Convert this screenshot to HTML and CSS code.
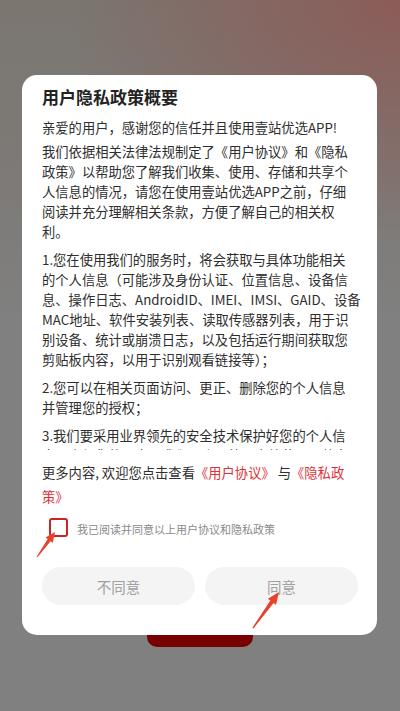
FILE: index.html
```html
<!DOCTYPE html>
<html lang="zh-CN">
<head>
<meta charset="utf-8">
<title>用户隐私政策概要</title>
<link rel="stylesheet" href="styles.css">
</head>
<body>
<div class="screen">
  <div class="page">
    <div class="page-btn"></div>
  </div>
  <div class="mask">
    <div class="card">
      <h1 class="title">用户隐私政策概要</h1>
      <div class="scroll">
        <p class="p-first">亲爱的用户，感谢您的信任并且使用壹站优选APP!</p>
        <p>我们依据相关法律法规制定了《用户协议》和《隐私<br>政策》以帮助您了解我们收集、使用、存储和共享个<br>人信息的情况，请您在使用壹站优选APP之前，仔细<br>阅读并充分理解相关条款，方便了解自己的相关权<br>利。</p>
        <p>1.您在使用我们的服务时，将会获取与具体功能相关<br>的个人信息（可能涉及身份认证、位置信息、设备信<br>息、操作日志、AndroidID、IMEI、IMSI、GAID、设备<br>MAC地址、软件安装列表、读取传感器列表，用于识<br>别设备、统计或崩溃日志，以及包括运行期间获取您<br>剪贴板内容，以用于识别观看链接等）；</p>
        <p>2.您可以在相关页面访问、更正、删除您的个人信息<br>并管理您的授权；</p>
        <p>3.我们要采用业界领先的安全技术保护好您的个人信<br>息，未经您的同意，我们不会从第三方处获取、共享<br>或对外提供您的信息。</p>
      </div>
      <p class="more">更多内容, 欢迎您点击查看<span class="link">《用户协议》</span> 与<span class="link">《隐私政<br>策》</span></p>
      <div class="check-row">
        <span class="checkbox"></span>
        <span class="check-text">我已阅读并同意以上用户协议和隐私政策</span>
      </div>
      <div class="actions">
        <div class="btn">不同意</div>
        <div class="btn">同意</div>
      </div>
    </div>
  </div>
  <svg class="arrows" width="400" height="711" viewBox="0 0 400 711">
    <polygon fill="#e8412c" points="36.6,556.7 47.7,539.1 45.5,537.5 55,532 52.8,542.7 50.6,541.2 37.4,557.3"/>
    <polygon fill="#e8412c" points="252.5,627.6 270.35,600.56 267.9,598.8 279,592 276.0,604.7 273.59,602.9 253.5,628.4"/>
  </svg>
</div>
</body>
</html>
```

FILE: styles.css
```css
html, body {
  margin: 0;
  padding: 0;
}

body {
  width: 400px;
  height: 711px;
  overflow: hidden;
  font-family: "Noto Sans CJK SC", "Noto Sans", sans-serif;
}

.screen {
  position: relative;
  width: 400px;
  height: 711px;
  overflow: hidden;
  background:
    radial-gradient(ellipse 330px 240px at 100% 0%, rgba(140, 92, 88, 1) 0%, rgba(140, 92, 88, 0) 100%),
    linear-gradient(180deg, #7b7670 0px, #7d7a77 180px, #808080 320px, #808080 100%);
}

.page {
  height: 100%;
  display: flex;
  flex-direction: column;
  justify-content: flex-end;
  align-items: center;
  padding-bottom: 64px;
  box-sizing: border-box;
}

.page-btn {
  width: 106px;
  height: 50px;
  background: #780000;
  border-radius: 10px;
}

.mask {
  position: absolute;
  inset: 0;
  padding-top: 75px;
  box-sizing: border-box;
}

.card {
  margin-left: 22px;
  width: 355px;
  box-sizing: border-box;
  background: #ffffff;
  border-radius: 15px;
  padding: 10px 12px 30px 20px;
}

.title {
  margin: 0;
  font-size: 17px;
  line-height: 24px;
  font-weight: 700;
  color: #222222;
}

.scroll {
  margin-top: 9px;
  height: 332px;
  overflow: hidden;
  font-size: 13.3px;
  line-height: 20px;
  color: #2e2e2e;
  white-space: nowrap;
}

.scroll p {
  margin: 0 0 8px 0;
}

.scroll .p-first {
  margin-bottom: 4px;
}

.more {
  margin: 11px 0 0 0;
  font-size: 13.3px;
  line-height: 24px;
  color: #2e2e2e;
  white-space: nowrap;
}

.link {
  color: #e0303a;
}

.check-row {
  margin-top: 9px;
  display: flex;
  align-items: center;
  padding-left: 7px;
  height: 19px;
}

.checkbox {
  width: 19px;
  height: 19px;
  box-sizing: border-box;
  border: 2px solid #cc2424;
  border-radius: 3px;
  flex: none;
}

.check-text {
  margin-left: 9px;
  font-size: 11px;
  line-height: 19px;
  color: #8a8a8a;
  padding-top: 3px;
}

.actions {
  margin-top: 30px;
  margin-right: 7px;
  display: flex;
  gap: 10px;
}

.btn {
  flex: 1;
  height: 38px;
  border-radius: 19px;
  background: #f4f4f4;
  color: #a0a0a0;
  font-size: 14.5px;
  display: flex;
  align-items: center;
  justify-content: center;
}

.arrows {
  position: absolute;
  left: 0;
  top: 0;
  pointer-events: none;
}
```
